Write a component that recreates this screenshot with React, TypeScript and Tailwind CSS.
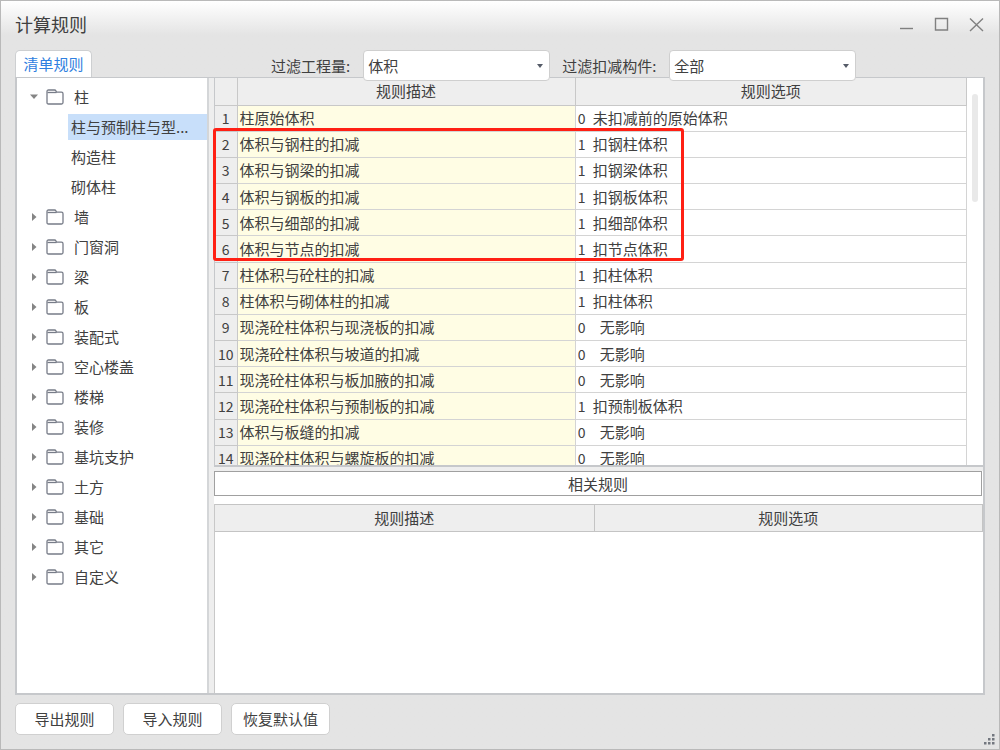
import { useState } from "react";
import clsx from "clsx";

interface TreeNode {
    label: string;
    children?: string[];
}

interface Rule {
    desc: string;
    code: number;
    option: string;
}

const tree: TreeNode[] = [
    { label: "柱", children: ["柱与预制柱与型...", "构造柱", "砌体柱"] },
    { label: "墙" },
    { label: "门窗洞" },
    { label: "梁" },
    { label: "板" },
    { label: "装配式" },
    { label: "空心楼盖" },
    { label: "楼梯" },
    { label: "装修" },
    { label: "基坑支护" },
    { label: "土方" },
    { label: "基础" },
    { label: "其它" },
    { label: "自定义" },
];

const rules: Rule[] = [
    { desc: "柱原始体积", code: 0, option: "未扣减前的原始体积" },
    { desc: "体积与钢柱的扣减", code: 1, option: "扣钢柱体积" },
    { desc: "体积与钢梁的扣减", code: 1, option: "扣钢梁体积" },
    { desc: "体积与钢板的扣减", code: 1, option: "扣钢板体积" },
    { desc: "体积与细部的扣减", code: 1, option: "扣细部体积" },
    { desc: "体积与节点的扣减", code: 1, option: "扣节点体积" },
    { desc: "柱体积与砼柱的扣减", code: 1, option: "扣柱体积" },
    { desc: "柱体积与砌体柱的扣减", code: 1, option: "扣柱体积" },
    { desc: "现浇砼柱体积与现浇板的扣减", code: 0, option: "无影响" },
    { desc: "现浇砼柱体积与坡道的扣减", code: 0, option: "无影响" },
    { desc: "现浇砼柱体积与板加腋的扣减", code: 0, option: "无影响" },
    { desc: "现浇砼柱体积与预制板的扣减", code: 1, option: "扣预制板体积" },
    { desc: "体积与板缝的扣减", code: 0, option: "无影响" },
    { desc: "现浇砼柱体积与螺旋板的扣减", code: 0, option: "无影响" },
];

function FolderIcon() {
    return (
        <svg width="18" height="16" viewBox="0 0 18 16" fill="none" stroke="#777c88" strokeWidth="1.3" className="shrink-0">
            <path d="M1 13.5V2.5Q1 1 2.5 1H8.5Q9.5 1 10 2L10.5 3.2H15.5Q17 3.2 17 4.7V13.5Q17 15 15.5 15H2.5Q1 15 1 13.5Z" />
            <path d="M1.5 3.5H10.5" />
        </svg>
    );
}

function Arrow({ open }: { open: boolean }) {
    return (
        <svg width="10" height="10" viewBox="0 0 10 10" fill="#858585" className="shrink-0">
            <path d={open ? "M1 2.5H9L5 7Z" : "M3 1L7.5 5L3 9Z"} />
        </svg>
    );
}

function FilterSelect({ id, label, options }: { id: string; label: string; options: string[] }) {
    return (
        <div className="flex items-center gap-[13px]">
            <label htmlFor={id}>{label}</label>
            <div className="relative">
                <select id={id} className="block h-[31px] w-[187px] appearance-none rounded-[4px] border border-[#cfcfcf] bg-white pl-1 outline-none">
                    {options.map((o) => (
                        <option key={o}>{o}</option>
                    ))}
                </select>
                <svg width="6" height="4" viewBox="0 0 6 4" fill="#555b68" className="pointer-events-none absolute top-[14px] right-[7px]">
                    <path d="M0 0H6L3 4Z" />
                </svg>
            </div>
        </div>
    );
}

export default function App() {
    const [open, setOpen] = useState("柱");
    const [selected, setSelected] = useState("柱与预制柱与型...");

    return (
        <div className="flex h-screen flex-col overflow-hidden border border-[#b9b9b9] bg-[#e4e4e4] bg-linear-to-b from-white to-[#e4e4e4] to-[34px] px-[14px] font-['Noto_Sans_CJK_SC',sans-serif] text-[15px] leading-5 text-[#404040]">
            <header className="flex h-[49px] shrink-0 items-center justify-between pb-[3px]">
                <h1 className="text-[18px]">计算规则</h1>
                <div className="flex gap-5 pr-px text-[#808080]">
                    <button aria-label="最小化">
                        <svg width="15" height="15" viewBox="0 0 15 15" stroke="currentColor" strokeWidth="1.4"><path d="M1 11.5H14" /></svg>
                    </button>
                    <button aria-label="最大化">
                        <svg width="15" height="15" viewBox="0 0 15 15" fill="none" stroke="currentColor" strokeWidth="1.4"><path d="M1.5 1.5H13.5V13H1.5Z" /></svg>
                    </button>
                    <button aria-label="关闭">
                        <svg width="15" height="15" viewBox="0 0 15 15" stroke="currentColor" strokeWidth="1.4"><path d="M1 1.5L14 14M14 1.5L1 14" /></svg>
                    </button>
                </div>
            </header>

            {/* the selects reach a little over the frame below */}
            <div className="relative z-10 -mb-1 flex h-[31px] shrink-0">
                <button className="h-[27px] w-[77px] shrink-0 rounded-t-[5px] border border-b-0 border-[#cdcfd1] bg-white text-[#2f80e0]">清单规则</button>
                <div className="ml-[179px] flex gap-3">
                    <FilterSelect id="quantity" label="过滤工程量:" options={["体积"]} />
                    <FilterSelect id="component" label="过滤扣减构件:" options={["全部"]} />
                </div>
            </div>

            <main className="flex min-h-0 flex-1 gap-[5px] border-2 border-t border-[#c6c8cb] bg-[#eeeeee]">
                <ul className="w-[192px] shrink-0 border-r-2 border-[#d4d6d8] bg-white pt-1">
                    {tree.map((node) => (
                        <li key={node.label}>
                            <button
                                className="flex h-[30px] w-full items-center pl-3"
                                aria-expanded={open === node.label}
                                onClick={() => setOpen(open === node.label ? "" : node.label)}
                            >
                                <Arrow open={open === node.label} />
                                <span className="mr-[10px] ml-[7px]"><FolderIcon /></span>
                                {node.label}
                            </button>
                            {node.children && open === node.label && (
                                <ul>
                                    {node.children.map((child) => (
                                        <li key={child} className="flex h-[30px] items-center pl-[51px]">
                                            <button
                                                className={clsx("h-[26px] w-full pl-[3px] text-left whitespace-nowrap", selected === child && "bg-[#c8dffa]")}
                                                onClick={() => setSelected(child)}
                                            >
                                                {child}
                                            </button>
                                        </li>
                                    ))}
                                </ul>
                            )}
                        </li>
                    ))}
                </ul>

                <section className="flex min-w-0 flex-1 flex-col bg-white">
                    <div className="relative shrink-0">
                        <div className="flex h-[389px] overflow-hidden border-b-2 border-l border-[#c6c8cb]">
                            <table className="h-[394px] flex-1 table-fixed border-collapse">
                                <colgroup>
                                    <col className="w-[22px]" />
                                    <col className="w-[45%]" />
                                    <col />
                                </colgroup>
                                <thead>
                                    <tr className="h-[27px] bg-[#eeeeee]">
                                        <th className="border-r border-b border-[#c8c8c8]"></th>
                                        <th className="border-r border-b border-[#c8c8c8] p-0 font-normal">规则描述</th>
                                        <th className="border-r border-b border-[#c8c8c8] p-0 font-normal">规则选项</th>
                                    </tr>
                                </thead>
                                <tbody>
                                    {rules.map((rule, i) => (
                                        <tr key={rule.desc}>
                                            <td className="border-r border-b border-[#c8c8c8] bg-[#eeeeee] p-0 text-center text-[14px]">{i + 1}</td>
                                            <td className="border-r border-b border-[#d4d4d4] bg-[#fffde4] p-0 pl-0.5">{rule.desc}</td>
                                            <td className="border-r border-b border-[#d4d4d4] p-0 pl-0.5">
                                                <div className={clsx("flex", rule.option === "无影响" ? "gap-[14px]" : "gap-[7px]")}>
                                                    <span className="w-2 text-[14px]">{rule.code}</span>
                                                    <span>{rule.option}</span>
                                                </div>
                                            </td>
                                        </tr>
                                    ))}
                                </tbody>
                            </table>
                            <div className="w-4 shrink-0 px-[5px] pt-4">
                                <div className="h-[108px] rounded-full bg-[#e9e9e9]" />
                            </div>
                        </div>
                        {/* outline round the steel, detail and node rules */}
                        <div className="pointer-events-none absolute top-[50px] -left-px h-[133px] w-[471px] rounded-[3px] border-3 border-[#ff2014]" />
                    </div>

                    <div className="h-1 shrink-0 bg-[#eeeeee]" />
                    <h2 className="mr-px h-[25px] shrink-0 border border-[#a0a0a0] text-center leading-6">相关规则</h2>

                    <div className="mt-2 flex-1 border-l border-[#c8c8c8]">
                        <table className="w-full table-fixed border-collapse">
                            <thead>
                                <tr className="h-[27px] bg-[#eeeeee]">
                                    <th className="w-[379px] border-t border-r border-b border-[#c4c4c4] p-0 font-normal">规则描述</th>
                                    <th className="border-t border-r border-b border-[#c4c4c4] p-0 font-normal">规则选项</th>
                                </tr>
                            </thead>
                        </table>
                    </div>
                </section>
            </main>

            <footer className="flex h-[54px] shrink-0 items-start gap-[9px] pt-2">
                {["导出规则", "导入规则", "恢复默认值"].map((text) => (
                    <button key={text} className="h-8 w-[99px] rounded-[5px] border border-[#d0d0d0] bg-white">{text}</button>
                ))}
                <svg width="12" height="12" viewBox="0 0 12 12" fill="#73777f" className="-mr-[11px] mb-1 ml-auto self-end">
                    <path d="M8 1H10.5V3.5H8ZM4 5H6.5V7.5H4ZM8 5H10.5V7.5H8ZM0 9H2.5V11.5H0ZM4 9H6.5V11.5H4ZM8 9H10.5V11.5H8Z" />
                </svg>
            </footer>
        </div>
    );
}
